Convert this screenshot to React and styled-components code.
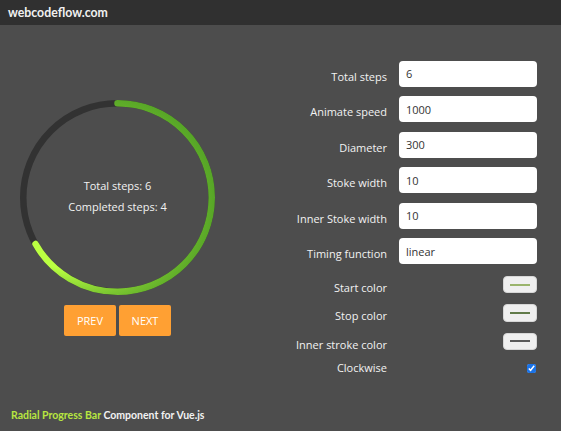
import { useState } from 'react';
import styled, { createGlobalStyle } from 'styled-components';

const DIAMETER = 195;
const STROKE = 6.5;

const FIELDS = [
  { label: 'Total steps', value: '6' },
  { label: 'Animate speed', value: '1000' },
  { label: 'Diameter', value: '300' },
  { label: 'Stoke width', value: '10' },
  { label: 'Inner Stoke width', value: '10' },
  { label: 'Timing function', value: 'linear' },
];

const COLORS = [
  { label: 'Start color', color: '#9ab46c' },
  { label: 'Stop color', color: '#617b49' },
  { label: 'Inner stroke color', color: '#5a5a5a' },
];

function RadialProgress({ total, completed }) {
  const radius = (DIAMETER - STROKE) / 2;
  const circumference = 2 * Math.PI * radius;
  const dash = (completed / total) * circumference;
  const center = DIAMETER / 2;
  // gradient focus sits on the end of the arc; the circle is rotated -90deg,
  // so the point is given in its un-rotated frame
  const angle = (completed / total) * 2 * Math.PI;
  const fx = 0.5 + 0.5 * Math.cos(angle);
  const fy = 0.5 + 0.5 * Math.sin(angle);

  return (
    <ProgressBox>
      <svg width={DIAMETER} height={DIAMETER} viewBox={`0 0 ${DIAMETER} ${DIAMETER}`}>
        <defs>
          <radialGradient id="radial-gradient" cx="0.5" cy="0.5" r="0.65" fx={fx} fy={fy}>
            <stop offset="30%" stopColor="#bbff42" />
            <stop offset="100%" stopColor="#429321" />
          </radialGradient>
        </defs>
        <circle
          cx={center}
          cy={center}
          r={radius}
          fill="none"
          stroke="#323232"
          strokeWidth={STROKE}
        />
        <circle
          cx={center}
          cy={center}
          r={radius}
          fill="none"
          stroke="url(#radial-gradient)"
          strokeWidth={STROKE}
          strokeLinecap="round"
          strokeDasharray={`${dash} ${circumference}`}
          transform={`rotate(-90 ${center} ${center})`}
        />
      </svg>
      <ProgressInfo>
        <p>Total steps: {total}</p>
        <p>Completed steps: {completed}</p>
      </ProgressInfo>
    </ProgressBox>
  );
}

function App() {
  const [completed, setCompleted] = useState(4);
  const total = 6;

  return (
    <Page>
      <GlobalStyle />
      <Header>webcodeflow.com</Header>
      <Main>
        <LeftPanel>
          <RadialProgress total={total} completed={completed} />
          <ButtonRow>
            <Button onClick={() => setCompleted(c => Math.max(0, c - 1))}>PREV</Button>
            <Button onClick={() => setCompleted(c => Math.min(total, c + 1))}>NEXT</Button>
          </ButtonRow>
        </LeftPanel>
        <Form>
          {FIELDS.map(field => (
            <Row key={field.label}>
              <Label>{field.label}</Label>
              <Input defaultValue={field.value} />
            </Row>
          ))}
          {COLORS.map(item => (
            <ColorRow key={item.label}>
              <Label $offset={6.3}>{item.label}</Label>
              <Cell>
                <Swatch>
                  <SwatchLine $color={item.color} />
                </Swatch>
              </Cell>
            </ColorRow>
          ))}
          <CheckRow>
            <Label $offset={1.4}>Clockwise</Label>
            <Cell>
              <Check type="checkbox" defaultChecked />
            </Cell>
          </CheckRow>
        </Form>
      </Main>
      <Footer>
        <Accent>Radial Progress Bar</Accent> Component for Vue.js
      </Footer>
    </Page>
  );
}

const GlobalStyle = createGlobalStyle`
  * {
    box-sizing: border-box;
  }
  body {
    margin: 0;
    background: #4d4d4d;
    font-family: "Open Sans", "Liberation Sans", sans-serif;
    color: #f2f2f2;
  }
`;

const Page = styled.div`
  display: flex;
  flex-direction: column;
  min-height: 100vh;
`;

const Header = styled.header`
  height: 25px;
  padding: 0 8px;
  background: #303030;
  color: #f0f0f0;
  font-family: Lato, "Liberation Sans", sans-serif;
  font-weight: 700;
  font-size: 12.3px;
  line-height: 25px;
`;

const Main = styled.main`
  display: flex;
  align-items: center;
  padding: 35.7px 24px 0 0;
`;

const LeftPanel = styled.div`
  display: flex;
  flex-direction: column;
  align-items: center;
  width: 235px;
`;

const ProgressBox = styled.div`
  position: relative;
  width: ${DIAMETER}px;
  height: ${DIAMETER}px;
  svg {
    display: block;
  }
`;

const ProgressInfo = styled.div`
  position: absolute;
  inset: 0;
  display: flex;
  flex-direction: column;
  align-items: center;
  justify-content: center;
  gap: 5px;
  padding-bottom: 2px;
  font-size: 11px;
  p {
    margin: 0;
    line-height: 16px;
  }
`;

const ButtonRow = styled.div`
  display: flex;
  gap: 2.5px;
  margin-top: 10px;
`;

const Button = styled.button`
  width: 52.5px;
  height: 31px;
  border: none;
  border-radius: 2px;
  background: #ffa033;
  color: #fff;
  font-family: "Open Sans", sans-serif;
  font-size: 11px;
  cursor: pointer;
`;

const Form = styled.div`
  display: flex;
  flex-direction: column;
  margin-left: auto;
`;

const Row = styled.div`
  display: flex;
  align-items: center;
  justify-content: flex-end;
  gap: 12px;
  height: 26px;
  margin-bottom: 9.5px;
`;

const ColorRow = styled(Row)`
  align-items: flex-start;
  height: 28.3px;
  margin-bottom: 0;
`;

const CheckRow = styled(ColorRow)`
  height: 16px;
`;

const Label = styled.span`
  padding-top: ${props => props.$offset ?? 6}px;
  font-size: 11px;
  line-height: 16px;
  text-align: right;
  white-space: nowrap;
`;

const Cell = styled.div`
  display: flex;
  justify-content: flex-end;
  width: 138px;
`;

const Input = styled.input`
  width: 138px;
  height: 26px;
  padding: 0 7px;
  border: none;
  border-radius: 4px;
  background: #fff;
  color: #333;
  font-family: "Open Sans", sans-serif;
  font-size: 11px;
`;

const Swatch = styled.div`
  display: flex;
  align-items: center;
  justify-content: center;
  width: 34px;
  height: 17.5px;
  margin-top: 2.3px;
  border: 1px solid #d6d6d6;
  border-radius: 4px;
  background: #efefef;
`;

const SwatchLine = styled.span`
  width: 20px;
  height: 2px;
  background: ${props => props.$color};
`;

const Check = styled.input`
  width: 9px;
  height: 9px;
  margin: 5.4px 1px 0 0;
  accent-color: #1a73e8;
`;

const Footer = styled.footer`
  margin-top: auto;
  padding: 0 11px 10px;
  font-family: Lato, "Liberation Sans", sans-serif;
  font-weight: 700;
  font-size: 10.5px;
  color: #f2f2f2;
`;

const Accent = styled.span`
  color: #b8e640;
`;

export default App;
